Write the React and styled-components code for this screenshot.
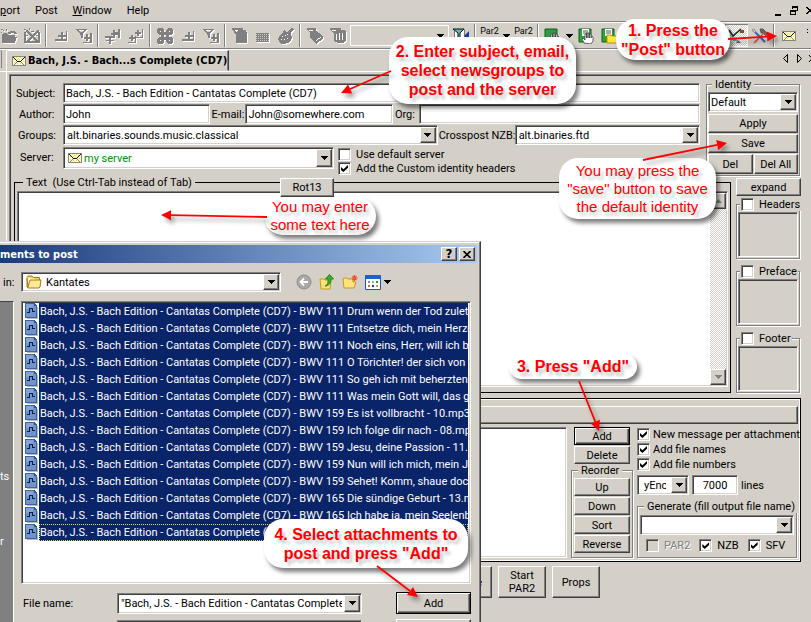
import React from 'react';
import styled, { createGlobalStyle, css } from 'styled-components';

const face = '#d4d0c8';
const uiFont = 'Roboto, "Open Sans", sans-serif';

const sunken = css`
  border: 1px solid;
  border-color: #808080 #fff #fff #808080;
  box-shadow: inset 1px 1px #404040, inset -1px -1px ${face};
`;
const raised = css`
  border: 1px solid;
  border-color: #fff #404040 #404040 #fff;
  box-shadow: inset -1px -1px #808080;
`;

const GlobalStyle = createGlobalStyle`
  * { box-sizing: border-box; }
  body { margin: 0; background: ${face}; color: #000; font: 11px/13px ${uiFont}; overflow: hidden; }
  button, input, select, textarea { font: inherit; color: inherit; border-radius: 0; margin: 0; }
`;

const Shell = styled.div`
  position: relative;
  min-height: 100vh;
  overflow: hidden;
  display: flex;
  flex-direction: column;
`;

/* ---- menu, toolbar, tabs ---- */
const MenuBar = styled.nav`
  display: flex;
  align-items: center;
  height: 22px;
  border-bottom: 1px solid #808080;
`;
const MenuItem = styled.button`
  border: 0;
  background: none;
  padding: 0;
  margin-right: 15px;
  white-space: nowrap;
`;
const WindowTools = styled.div`
  display: flex;
  margin-left: auto;
`;
const Toolbar = styled.div`
  display: flex;
  align-items: center;
  height: 27px;
  margin-left: -3px;
  border-top: 1px solid #fff;
  border-bottom: 1px solid #808080;
`;
const ToolButton = styled.button`
  flex: none;
  width: ${(p) => (p.$narrow ? 11 : 23)}px;
  height: 23px;
  padding: 0;
  display: flex;
  align-items: center;
  justify-content: center;
  border: 0;
  background: ${(p) => (p.$pressed ? 'repeating-conic-gradient(#fff 0 25%, #d4d0c8 0 50%) 0 0 / 2px 2px' : 'none')};
  box-shadow: ${(p) => (p.$pressed ? 'inset 1px 1px #808080, inset -1px -1px #fff' : 'none')};
  svg { filter: ${(p) => (p.$off ? 'drop-shadow(1px 1px 0 #fff)' : 'none')}; }
`;
const Separator = styled.span`
  flex: none;
  width: 2px;
  height: 23px;
  margin: 0 2px;
  border-left: 1px solid #808080;
  border-right: 1px solid #fff;
`;
const ToolCombo = styled.button`
  flex: none;
  display: flex;
  justify-content: flex-end;
  align-items: center;
  width: 99px;
  height: 21px;
  margin: 0 0 0 1px;
  padding: 0 4px 0 0;
  border: 1px solid #fff;
  background: none;
`;
const Spacer = styled.span`
  flex: 1;
`;
const TabRow = styled.div`
  display: flex;
  height: 23px;
  border-top: 1px solid #fff;
  border-bottom: 1px solid #fff;
`;
const TabEdge = styled.span`
  width: 2px;
  height: 18px;
  margin-right: 4px;
  border-right: 1px solid #808080;
  border-radius: 0 3px 0 0;
`;
const Tab = styled.button`
  display: flex;
  align-items: center;
  gap: 2px;
  height: 21px;
  padding: 0 1px 0 5px;
  border: 1px solid;
  border-color: #fff #404040 transparent #fff;
  border-radius: 2px 0 0 0;
  box-shadow: inset -1px 0 #808080;
  background: ${face};
  font: bold 11px/13px "DejaVu Sans Condensed", "DejaVu Sans", sans-serif;
  white-space: nowrap;
`;
const TabArrows = styled.div`
  display: flex;
  align-items: center;
  height: 17px;
  margin-left: auto;
`;

/* ---- page ---- */
const PageFrame = styled.div`
  flex: 1;
  margin-left: 6px;
  padding: 2px 0 0 2px;
  border-left: 1px solid #fff;
`;
const Page = styled.main`
  height: 100%;
  padding: 8px 10px 0 5px;
  border: solid #808080;
  border-width: 1px 0 0 1px;
  box-shadow: inset 1px 1px #404040;
`;
const Columns = styled.div`
  display: flex;
  gap: ${(p) => p.$gap || 0}px;
  align-items: ${(p) => (p.$stretch ? 'stretch' : 'flex-start')};
`;
const Form = styled.form`
  flex: 1;
  min-width: 0;
  display: flex;
  flex-direction: column;
  gap: 1px;
  margin-left: 1px;
`;
const FormRow = styled.div`
  display: flex;
  align-items: center;
  height: 20px;
`;
const ServerRow = styled.div`
  display: flex;
  align-items: flex-start;
  height: 28px;
  padding-top: 1px;
  > label { padding-top: 4px; }
`;
const FieldLabel = styled.label`
  flex: none;
  width: ${(p) => p.$width}px;
  padding-left: ${(p) => p.$inset || 0}px;
  white-space: nowrap;
`;
const TextInput = styled.input`
  ${sunken}
  flex: ${(p) => p.$grow || 1} 1 0;
  min-width: 0;
  height: 20px;
  padding: 0 2px;
  background: #fff;
  text-align: ${(p) => p.$align || 'left'};
`;
const ComboFrame = styled.div`
  ${sunken}
  flex: ${(p) => (p.$width ? '0 0 ' + p.$width + 'px' : (p.$grow || 1) + ' 1 0')};
  min-width: 0;
  height: ${(p) => p.$height || 20}px;
  padding: 1px;
  display: flex;
  align-items: stretch;
  background: #fff;
`;
const ComboIcon = styled.span`
  display: flex;
  align-items: center;
  padding-left: 3px;
`;
const comboText = css`
  flex: 1;
  min-width: 0;
  border: 0;
  outline: 0;
  padding: 0 ${(p) => p.$inset || 2}px;
  background: none;
  appearance: none;
  color: ${(p) => p.$color || '#000'};
`;
const ComboInput = styled.input`${comboText}`;
const ComboSelect = styled.select`${comboText}`;
const DropButton = styled.button`
  ${raised}
  flex: none;
  width: 16px;
  padding: 0;
  display: flex;
  align-items: center;
  justify-content: center;
  background: ${face};
`;
const Button = styled.button`
  ${raised}
  flex: ${(p) => (p.$fill ? '1 1 0' : 'none')};
  width: ${(p) => (p.$width ? p.$width + 'px' : 'auto')};
  height: ${(p) => p.$height || 18}px;
  padding: 0;
  background: ${face};
  white-space: pre-line;
  ${(p) => p.$default && 'border-color: #000; box-shadow: inset 1px 1px #fff, inset -1px -1px #404040, inset -2px -2px #808080;'}
`;
const CheckLabel = styled.label`
  display: flex;
  align-items: center;
  gap: ${(p) => p.$gap || 5}px;
  white-space: nowrap;
  color: ${(p) => (p.$off ? '#808080' : '#000')};
  text-shadow: ${(p) => (p.$off ? '1px 1px #fff' : 'none')};
`;
const CheckInput = styled.input`
  ${sunken}
  appearance: none;
  flex: none;
  width: 13px;
  height: 13px;
  background: ${(p) => (p.disabled ? face : '#fff')};
  &:checked::after {
    content: '';
    display: block;
    width: 7px;
    height: 7px;
    margin: 2px;
    background: #000;
    clip-path: polygon(0 30%, 35% 60%, 100% 0, 100% 40%, 35% 100%, 0 70%);
  }
`;
const CheckStack = styled.div`
  display: flex;
  flex-direction: column;
  gap: 1px;
  margin-left: 4px;
  padding-top: 1px;
`;
const Group = styled.fieldset`
  position: relative;
  min-width: 0;
  width: ${(p) => (p.$width ? p.$width + 'px' : 'auto')};
  flex: ${(p) => (p.$fill ? '1 1 0' : 'none')};
  margin: ${(p) => p.$margin || '0'};
  padding: ${(p) => p.$padding || '1px'};
  border: 1px solid ${(p) => (p.$dark ? '#000' : '#808080')};
  box-shadow: ${(p) => (p.$dark ? 'none' : '1px 1px #fff, inset 1px 1px #fff')};
`;
const Legend = styled.legend`
  margin-left: ${(p) => p.$inset || 4}px;
  padding: 0 ${(p) => p.$pad || 3}px;
  background: ${face};
  white-space: pre;
`;
const Stack = styled.div`
  display: flex;
  flex-direction: column;
  flex: none;
  width: ${(p) => (p.$width ? p.$width + 'px' : 'auto')};
  gap: ${(p) => p.$gap || 0}px;
  padding: ${(p) => p.$padding || '0'};
`;
const Rot13 = styled.div`
  position: absolute;
  top: -11px;
  left: 265px;
`;
const MessageBox = styled.div`
  ${sunken}
  display: flex;
  height: 196px;
  padding: 1px;
  background: #fff;
`;
const MessageText = styled.textarea`
  flex: 1;
  border: 0;
  outline: 0;
  resize: none;
  background: none;
`;
const ScrollTrack = styled.div`
  width: 16px;
  display: flex;
  flex-direction: column;
  justify-content: space-between;
  background: repeating-conic-gradient(#fff 0 25%, #d4d0c8 0 50%) 0 0 / 2px 2px;
  button { height: 16px; }
`;
const SidePanel = styled.div`
  ${sunken}
  height: 45px;
`;
const AttachPanel = styled.section`
  margin: 5px 0 0;
  padding: 7px 2px 3px;
  border: 1px solid #000;
  box-shadow: inset -1px -1px #fff, inset 1px 1px #fff;
`;
const AttachBar = styled.div`
  ${raised}
  height: 18px;
  margin-bottom: 3px;
`;
const AttachList = styled.div`
  ${sunken}
  flex: 1;
  background: #fff;
`;
const ActionRow = styled.div`
  display: flex;
  gap: 6px;
  margin: 4px 201px 0 0;
  justify-content: flex-end;
`;
const CutButton = styled(Button)`
  text-align: right;
  padding-right: 9px;
`;

/* ---- dialog ---- */
const Dialog = styled.section`
  position: absolute;
  top: 241px;
  left: 0;
  width: 481px;
  height: 400px;
  padding: 3px 3px 0 0;
  background: ${face};
  border: solid #404040;
  border-width: 1px 1px 0 0;
  border-top-color: ${face};
  box-shadow: inset -1px 0 #808080, inset 0 1px #fff;
`;
const TitleBar = styled.header`
  display: flex;
  align-items: center;
  gap: 2px;
  height: 18px;
  padding-right: 2px;
  background: linear-gradient(90deg, #1b3a7c, #a6caf0);
  color: #fff;
  font: bold 11px/13px "DejaVu Sans Condensed", "DejaVu Sans", sans-serif;
  span { flex: 1; }
  button { width: 16px; height: 14px; display: flex; align-items: center; justify-content: center; color: #000; font: bold 12px/12px "DejaVu Sans", sans-serif; }
`;
const LookRow = styled.div`
  display: flex;
  align-items: center;
  padding: 9px 0 9px 3px;
`;
const LookIcons = styled.div`
  display: flex;
  align-items: center;
  gap: 7px;
  padding-left: 15px;
  button { display: flex; align-items: center; gap: 3px; border: 0; padding: 0; background: none; height: 16px; }
`;
const DialogBody = styled.div`
  display: flex;
`;
const Places = styled.aside`
  flex: none;
  width: 14px;
  margin-right: 7px;
  height: 340px;
  padding-top: 168px;
  background: #808080;
  border-top: 1px solid #404040;
  border-right: 1px solid #fff;
  color: #fff;
  display: flex;
  flex-direction: column;
  gap: 52px;
`;
const DialogMain = styled.div`
  flex: 1;
  min-width: 0;
  padding-right: 6px;
`;
const FileList = styled.ul`
  ${sunken}
  height: 283px;
  margin: 0 0 8px;
  padding: 1px 2px 1px 3px;
  list-style: none;
  background: #fff;
  overflow: hidden;
`;
const FileItem = styled.li`
  display: flex;
  height: 17px;
`;
const FileName = styled.span`
  flex: 1;
  min-width: 0;
  margin-left: 1px;
  padding: 2px 1px;
  background: #0a246a;
  color: #fff;
  white-space: nowrap;
  overflow: hidden;
  ${(p) => p.$focus && 'outline: 1px dotted #e0d890; outline-offset: -1px;'}
`;
const DialogRow = styled.div`
  display: flex;
  align-items: center;
  margin-bottom: 5px;
`;

/* ---- annotations ---- */
const Callout = styled.div`
  position: absolute;
  left: ${(p) => p.$x}px;
  top: ${(p) => p.$y}px;
  width: ${(p) => p.$w}px;
  height: ${(p) => p.$h}px;
  display: flex;
  align-items: center;
  justify-content: center;
  border-radius: 19px;
  background: #fff;
  box-shadow: 3px 4px 4px rgba(0, 0, 0, 0.5);
  color: #f00;
  text-align: center;
  white-space: pre;
  text-shadow: 3px 4px 3px rgba(0, 0, 0, 0.22);
  font: ${(p) => (p.$light ? '15px/18px' : 'bold 16px/19px')} "Liberation Sans", Arial, sans-serif;
`;
const ArrowLayer = styled.svg`
  position: absolute;
  left: 0;
  top: 0;
  pointer-events: none;
  filter: drop-shadow(3px 4px 2px rgba(0, 0, 0, 0.35));
`;

/* ---- icons ---- */
const Down = ({ color = '#000' }) => (
  <svg width="7" height="4" viewBox="0 0 7 4" fill={color} shapeRendering="crispEdges"><path d="M0 0h7v1H6v1H5v1H4v1H3V3H2V2H1V1H0z" /></svg>
);
const Envelope = () => (
  <svg width="14" height="10" viewBox="0 0 14 10" shapeRendering="crispEdges">
    <path d="M0 0h14v10H0z" fill="#85857a" />
    <path d="M1 1h12v8H1z" fill="#fffbd0" />
    <path d="M2 3h1v1H2zM4 1h1v1H4zM6 2h1v1H6zM8 1h1v1H8zM10 2h1v1h-1zM5 7h1v1H5zM8 7h1v1H8zM2 6h1v1H2zM11 5h1v1h-1zM7 3h1v1H7zM5 3h1v1H5z" fill="#f0e030" />
    <path d="M1 1h1v1H1zM2 2h1v1H2zM3 3h1v1H3zM4 4h1v1H4zM5 5h4v1H5zM9 4h1v1H9zM10 3h1v1h-1zM11 2h1v1h-1zM12 1h1v1h-1z" fill="#111" />
    <path d="M4 6h1v1H4zM3 7h1v1H3zM2 8h1v1H2zM9 6h1v1H9zM10 7h1v1h-1zM11 8h1v1h-1z" fill="#8a8860" />
  </svg>
);
const G = ({ children, w = 16, h = 16 }) => (
  <svg width={w} height={h} viewBox={`0 0 ${w} ${h}`} fill="#808080" shapeRendering="crispEdges">{children}</svg>
);
const plusMark = 'M8 4h2v3h3v2h-3v2H8V9H5V7h3z';
const icons = {
  folder: <G><path d="M1 6h1V5h4l1 2h7v2h2l-2 6H1zM0 1h2v1H0zM2 2h1v1H2zM5 1h1v2H5zM0 4h1v1H0zM7 4h2V3h4l2 2h1v1h-3V5h-3v1H7z" /></G>,
  delmail: <G><path d="M0 4h2v11H0zM14 4h2v11h-2zM0 13h16v2H0zM0 1h2v1H0zM3 2h1v1H3zM5 0h1v2H5z" /><path d="M2 2h2l4 5 5-5h2v1L9.500 8.500 14 13h-3L8 10l-3 3H2l4.500-4.500L2 4z" /><path d="M7 3h3v1H7zM2 7h2v1H2zM12 7h2v1h-2z" /></G>,
  plus: <G><path d={plusMark} /><path d="M13 3h1v10H2v-2h11z" /></G>,
  filter: <G><path d="M0 1h11v1h-1v1H9v1H8v1H7v5H5V7H4V5H3V4H2V3H1V2H0zM3 2v1h1v1h3V3h1V2z" fillRule="evenodd" /><path d="M10 6h2v3h2v2h-2v2h-2v-2H8V9h2zM14 5h2v10H7v-1h7z" /></G>,
  sort: <G><path d="M8 2h2v2h3V1h2v9h-2V7h-3v3H8V7H6V5h2zM0 8h9v2H0zM4 10h2v2h3v1H6v3H4v-3H1v-1h3z" /></G>,
  plusTwo: <G><path d="M9 2h2v2h2v2h-2v2H9V6H7V4h2zM14 1h1v9H8V9h6zM3 7h2v2h2v2H5v2H3v-2H1V9h2zM7 8h1v7H0v-1h7z" /></G>,
  knot: <G><path fillRule="evenodd" d="M1 0h4l2 2v2h2V2l2-2h4l1 2v3l-2 2h-2v2h2l2 2v3l-1 2h-4l-2-2v-2H7v2l-2 2H1l-1-2v-3l2-2h2V7H2L0 5V2zM3 3v1h1V3zM12 3v1h1V3zM7 7v2h2V7zM3 12v1h1v-1zM12 12v1h1v-1z" /></G>,
  doc: <G><path d="M0 0h11v2h3v2h1v11H4V6H3V5H2V3H1V2H0z" /><path d="M3 2h3v1H3zM4 3h1v1H4z" fill="#fff" /></G>,
  dots: <G><path d="M1 5h13v9H1z" /><path d="M1 6.500h13M1 8.500h13M1 10.500h13M1 12.500h13" stroke="#d4d0c8" strokeDasharray="1 1" /></G>,
  bag: <G><path d="M6 2l3 2 4-4 3 1-3 4 1 5-2 4-5 2H3l-3-5 2-4 3-2z" /><path d="M4 8h1v1H4zM7 7h1v1H7zM9 10h1v1H9zM6 11h1v1H6zM3 11h1v1H3zM9 6h1v1H9z" fill="#fff" /></G>,
  book: <G><path d="M0 0h9v3l3 2 4 4v2l-7 5-6-7V5L0 2z" /><path d="M2 2h4v1H2zM9 12l5-3v1l-5 3z" fill="#fff" /></G>,
  books: <G><path d="M0 0h11v2h3l2 2v9l-3 2H8l-4-2V6L0 2z" /><path d="M2 2h4v1H2zM6 6h1v6H6zM9 5h1v7H9zM12 5h1v7h-1z" fill="#fff" /></G>,
};
const FilterColor = () => (
  <svg width="18" height="16" viewBox="0 0 18 16"><path d="M2.500 1.500h10v13h-10z" fill="#fff" stroke="#777" /><path d="M1 1h11L8 5v5H6V5z" fill="#5ab8b0" stroke="#111" /><path d="M17 3l-5 5 5 4z" fill="#1d3e9e" /><path d="M9 10l4 3-3 3-4-3z" fill="#eee021" /></svg>
);
const ParText = styled.span`
  display: flex;
  flex-direction: column;
  align-items: center;
  font: 9px/9px Roboto, sans-serif;
`;
const Par = () => (
  <ParText>Par2<svg width="16" height="8" viewBox="0 0 16 8"><path d="M0 1h4v6H0z" fill="#3ac0e8" /><path d="M3 1h3v6H3z" fill="#f0e000" /><path d="M6 1h3v6H6z" fill="#2443d8" /><path d="M0 4h3v3H0z" fill="#22a040" /><path d="M11 3h4v4h-4z" fill="none" stroke="#2aa3a0" /></svg></ParText>
);
const Hand = ({ folder, disk }) => (
  <svg width="17" height="16" viewBox="0 0 17 16">
    <path d="M1 1h12v13H1z" fill={disk ? '#26a636' : '#2f9a42'} stroke="#145a20" />
    {disk && <path d="M4 1h7v7H4z" fill="#fff" />}
    {disk && <path d="M5 3h5M5 5h5" stroke="#555" />}
    {folder
      ? <path d="M6 7h4l1 1h5v7H6z" fill="#ffe640" stroke="#c08a10" />
      : <path d="M6 15l-2-4 1-1 2 2V6h1.500v4V5H10v5V5h1.500v5V6H13v4l1-2 1 1v4l-2 3z" fill="#fff" stroke="#444" strokeWidth=".8" />}
  </svg>
);
const BrushIcon = () => (
  <svg width="17" height="16" viewBox="0 0 17 16"><path d="M1 2l4 6 8-7" fill="none" stroke="#222" strokeWidth="1.500" /><path d="M12 2h4v3h-4z" fill="#8a4a2a" /><path d="M6 9l4 4H5z" fill="#50a8a0" /><path d="M10 12l3 3H8z" fill="#666" /></svg>
);
const ToolsIcon = () => (
  <svg width="17" height="16" viewBox="0 0 17 16"><path d="M2 2l12 12" stroke="#3a5fc8" strokeWidth="2" /><path d="M12 6L3 15" stroke="#c84a28" strokeWidth="1.500" /><path d="M9 1h3l4 4-1 3-3-3h-2z" fill="#666" stroke="#444" strokeWidth=".7" /><path d="M1 2l2-1 2 3-1 1z" fill="#ccc" stroke="#777" strokeWidth=".6" /></svg>
);
const FolderIcon = () => (
  <svg width="16" height="14" viewBox="0 0 16 14"><path d="M1 2.500L2 1h4l1.500 1.500h6V5" fill="#f7cf4c" stroke="#a67a12" /><path d="M1 3v9l1 1h11l1-1 1-7H4L2 12z" fill="#fde995" stroke="#a67a12" /></svg>
);
const FileIcon = () => (
  <svg width="13" height="16" viewBox="0 0 13 16" shapeRendering="crispEdges">
    <path d="M12 4h1v12H2v-1h10z" fill="#b8b8b8" />
    <path d="M0 0h9l3 3v12H0z" fill="#3d629e" /><path d="M1 1h8v2h2v11H1z" fill="#6f93cc" /><path d="M1 1h7v5H1z" fill="#86a5d6" /><path d="M9 0v3h3z" fill="#2f57a0" />
    <path d="M2 9h2V5h4v4H7V6H5v4H2zM8 8h2v1H8z" fill="#0b1c44" />
  </svg>
);
const BackIcon = () => (
  <svg width="16" height="16" viewBox="0 0 16 16"><circle cx="8" cy="8" r="7" fill="#a9a8a4" stroke="#8d8c88" /><path d="M12 8H5M8 4.500L4.500 8 8 11.500" fill="none" stroke="#fff" strokeWidth="1.800" /></svg>
);
const UpIcon = () => (
  <svg width="16" height="16" viewBox="0 0 16 16"><path d="M1 5h4l1 1h6l-1 9H2z" fill="#ffe27a" stroke="#c59a20" /><path d="M6 12c3-1 3-4 3-7H6.500L10.500.5l4 4.500H12c0 4-2 7-6 7z" fill="#37b02c" stroke="#187010" strokeWidth=".8" /></svg>
);
const NewFolderIcon = () => (
  <svg width="16" height="16" viewBox="0 0 16 16"><path d="M1 5l1-1h3l1 1h5v3h3l-2 6H2z" fill="#ffe27a" stroke="#c59a20" /><path d="M12.500 1v6M9.500 4h6M10.500 2l4 4M14.500 2l-4 4" stroke="#f0562a" strokeWidth="1.200" /></svg>
);
const ViewsIcon = () => (
  <svg width="16" height="15" viewBox="0 0 16 15"><path d="M.5.5h15v14H.5z" fill="#fff" stroke="#1956b8" /><path d="M0 0h16v4H0z" fill="#1d62cc" /><path d="M3 6h2v2H3z" fill="#8a93b8" /><path d="M7 6h2v2H7z" fill="#9ab" /><path d="M11 6h2v2h-2z" fill="#3a8a3a" /><path d="M3 10h2v2H3z" fill="#b07a3a" /><path d="M7 10h2v2H7z" fill="#223a88" /><path d="M11 10h2v2h-2z" fill="#c9a53a" /></svg>
);

const Combo = ({ id, label, value, icon, editable, color, inset, ...frame }) => (
  <ComboFrame {...frame}>
    {icon && <ComboIcon>{icon}</ComboIcon>}
    {editable
      ? <ComboInput id={id} aria-label={label} defaultValue={value} $inset={inset} />
      : <ComboSelect id={id} aria-label={label} defaultValue={value} $color={color} $inset={inset}><option>{value}</option></ComboSelect>}
    <DropButton type="button" tabIndex={-1} aria-label="Open list"><Down /></DropButton>
  </ComboFrame>
);
const Check = ({ label, checked, disabled, gap }) => (
  <CheckLabel $off={disabled} $gap={gap}>
    <CheckInput type="checkbox" defaultChecked={checked} disabled={disabled} />{label}
  </CheckLabel>
);
const Side = ({ label }) => (
  <Group $margin="0 1px 0 0">
    <Legend $inset={2} $pad={1}><Check label={label} /></Legend>
    <SidePanel />
  </Group>
);
const Arrow = ({ from, to }) => {
  const [x1, y1] = from;
  const [x2, y2] = to;
  const len = Math.hypot(x2 - x1, y2 - y1);
  const ux = (x2 - x1) / len;
  const uy = (y2 - y1) / len;
  const bx = x2 - ux * 10;
  const by = y2 - uy * 10;
  return (
    <g>
      <path d={`M${x1} ${y1}L${bx} ${by}`} stroke="#f00" strokeWidth="1.800" />
      <path d={`M${x2} ${y2}L${bx - uy * 5} ${by + ux * 5}L${bx + uy * 5} ${by - ux * 5}z`} fill="#f00" />
    </g>
  );
};

const toolGroups = [
  ['folder', 'delmail'], ['plus', 'filter'], ['sort', 'plusTwo'],
  ['knot', 'plus', 'filter'], ['doc', 'dots', 'bag'], ['book', 'books'],
];
const files = [
  '111 Drum wenn der Tod zuletzt', '111 Entsetze dich, mein Herze', '111 Noch eins, Herr, will ich bitten',
  '111 O Törichter! der sich von Gott', '111 So geh ich mit beherzten Schritten', "111 Was mein Gott will, das g'scheh",
  '159 Es ist vollbracht - 10.mp3', '159 Ich folge dir nach - 08.mp3', '159 Jesu, deine Passion - 11.mp3',
  '159 Nun will ich mich, mein Jesu', '159 Sehet! Komm, shaue doch', '165 Die sündige Geburt - 13.mp3',
  '165 Ich habe ja, mein Seelenbräutigam', '165',
];
const subject = 'Bach, J.S. - Bach Edition - Cantatas Complete (CD7)';

export default function App() {
  return (
    <Shell>
      <GlobalStyle />
      <MenuBar>
        <MenuItem><u>p</u>ort</MenuItem>
        <MenuItem>Post</MenuItem>
        <MenuItem><u>W</u>indow</MenuItem>
        <MenuItem>Help</MenuItem>
        <WindowTools>
          <svg width="37" height="12" viewBox="0 0 37 12" fill="none" stroke="#000" shapeRendering="crispEdges">
            <path d="M1 10h6" strokeWidth="2" /><path d="M18.500 4V1.500h5v4H22M16.500 5.500h5v4h-5zM16 6.500h6M18 2.500h6" /><path d="M33 2l6 7M33 9l6-7" strokeWidth="1.500" />
          </svg>
        </WindowTools>
      </MenuBar>
      <Toolbar>
        {toolGroups.map((names, g) => (
          <React.Fragment key={g}>
            {g > 0 && <Separator />}
            {names.map((n) => <ToolButton key={n} $off aria-label={n}>{icons[n]}</ToolButton>)}
          </React.Fragment>
        ))}
        <ToolCombo aria-label="Search"><Down /></ToolCombo>
        <ToolButton aria-label="Filter"><FilterColor /></ToolButton>
        <Separator />
        <ToolButton><Par /></ToolButton>
        <ToolButton $narrow aria-label="More"><Down /></ToolButton>
        <ToolButton><Par /></ToolButton>
        <Separator />
        <ToolButton aria-label="Hand"><Hand /></ToolButton>
        <ToolButton $narrow aria-label="More"><Down /></ToolButton>
        <ToolButton aria-label="Save"><Hand disk /></ToolButton>
        <ToolButton aria-label="Save to folder"><Hand disk folder /></ToolButton>
        <Spacer />
        <ToolButton $pressed aria-label="Design"><BrushIcon /></ToolButton>
        <ToolButton aria-label="Settings"><ToolsIcon /></ToolButton>
        <Separator />
        <ToolButton aria-label="Post"><Envelope /></ToolButton>
        <ToolButton $narrow aria-label="More">
          <svg width="5" height="16" viewBox="0 0 5 16" fill="none" stroke="#000"><path d="M4 1l2 2-2 2" /></svg>
        </ToolButton>
      </Toolbar>
      <TabRow>
        <TabEdge />
        <Tab><Envelope />Bach, J.S. - Bach...s Complete (CD7)</Tab>
        <TabArrows>
          <svg width="28" height="9" viewBox="0 0 28 9" fill="none" stroke="#000"><path d="M4.500.5v8l-4-4zM14.500.5v8l4-4zM26 1l6 7M26 8l6-7" /></svg>
        </TabArrows>
      </TabRow>

      <PageFrame>
        <Page>
          <Columns $gap={6}>
            <Form>
              <FormRow>
                <FieldLabel htmlFor="subject" $width={47}>Subject:</FieldLabel>
                <TextInput id="subject" defaultValue={subject} />
              </FormRow>
              <FormRow>
                <FieldLabel htmlFor="author" $width={47} $inset={3}>Author:</FieldLabel>
                <TextInput id="author" defaultValue="John" $grow={146} />
                <FieldLabel htmlFor="email" $width={35} $inset={1}>E-mail:</FieldLabel>
                <TextInput id="email" defaultValue="John@somewhere.com" $grow={146} />
                <FieldLabel htmlFor="org" $width={26} $inset={2}>Org:</FieldLabel>
                <TextInput id="org" $grow={284} />
              </FormRow>
              <FormRow>
                <FieldLabel htmlFor="groups" $width={47} $inset={2}>Groups:</FieldLabel>
                <Combo id="groups" editable value="alt.binaries.sounds.music.classical" $grow={376} />
                <FieldLabel htmlFor="nzb" $width={77} $inset={1}>Crosspost NZB:</FieldLabel>
                <Combo id="nzb" editable value="alt.binaries.ftd" $grow={184} />
              </FormRow>
              <ServerRow>
                <FieldLabel htmlFor="server" $width={47} $inset={4}>Server:</FieldLabel>
                <Combo id="server" value="my server" icon={<Envelope />} color="#009000" $width={271} $height={22} />
                <CheckStack>
                  <Check label="Use default server" />
                  <Check label="Add the Custom identity headers" checked />
                </CheckStack>
              </ServerRow>
            </Form>
            <Group $width={94} $margin="-5px 1px 0 0">
              <Legend>Identity</Legend>
              <FormRow>
                <Combo label="Identity" value="Default" inset={1} />
              </FormRow>
              <Stack $gap={1} $padding="2px 0 0">
                <Button $height={19}>Apply</Button>
                <Button $height={19}>Save</Button>
                <Columns $gap={1}>
                  <Button $fill $height={20}>Del</Button>
                  <Button $fill $height={20}>Del All</Button>
                </Columns>
              </Stack>
            </Group>
          </Columns>

          <Columns $gap={5} $stretch>
            <Group $fill $dark $padding="2px" $margin="0 0 0 -1px">
              <Legend $inset={6}>Text  (Use Ctrl-Tab instead of Tab)</Legend>
              <Rot13><Button $width={54} $height={19}>Rot13</Button></Rot13>
              <MessageBox>
                <MessageText aria-label="Text" />
                <ScrollTrack>
                  <DropButton aria-label="Scroll up"><svg width="7" height="4" viewBox="0 0 7 4"><path d="M3.500 0L7 4H0z" fill="#808080" /></svg></DropButton>
                  <DropButton aria-label="Scroll down"><Down color="#808080" /></DropButton>
                </ScrollTrack>
              </MessageBox>
            </Group>
            <Stack $width={65} $gap={6} $padding="2px 0 0">
              <Stack $gap={2}>
                <Button>expand</Button>
                <Side label="Headers" />
              </Stack>
              <Side label="Preface" />
              <Side label="Footer" />
            </Stack>
          </Columns>

          <AttachPanel>
            <AttachBar />
            <Columns $gap={4} $stretch>
              <AttachList />
              <Stack $width={62}>
                <Stack $gap={1} $padding="0 3px">
                  <Button $default>Add</Button>
                  <Button>Delete</Button>
                </Stack>
                <Group $padding="1px 2px 4px">
                  <Legend>Reorder</Legend>
                  <Stack $gap={1}>
                    <Button>Up</Button>
                    <Button>Down</Button>
                    <Button>Sort</Button>
                    <Button>Reverse</Button>
                  </Stack>
                </Group>
              </Stack>
              <Stack $width={161} $padding="1px 0 0">
                <Stack $gap={2} $padding="0 0 4px 0">
                  <Check label="New message per attachment" checked gap={3} />
                  <Check label="Add file names" checked gap={3} />
                  <Check label="Add file numbers" checked gap={3} />
                </Stack>
                <Columns $gap={3}>
                  <Combo label="Encoding" value="yEnc" $width={52} inset={5} />
                  <FormRow>
                    <Stack $width={46}><FormRow><TextInput id="lines" defaultValue="7000" $align="center" /></FormRow></Stack>
                    <FieldLabel htmlFor="lines" $width={30} $inset={3}>lines</FieldLabel>
                  </FormRow>
                </Columns>
                <Group $margin="5px 1px 0 0" $padding="2px 2px 5px">
                  <Legend>Generate (fill output file name)</Legend>
                  <FormRow><Combo label="Output file name" editable value="" /></FormRow>
                  <Stack $padding="4px 0 0 6px">
                    <Columns $gap={9}>
                      <Check label="PAR2" disabled />
                      <Check label="NZB" checked />
                      <Check label="SFV" checked />
                    </Columns>
                  </Stack>
                </Group>
              </Stack>
            </Columns>
          </AttachPanel>
          <ActionRow>
            <CutButton $width={48} $height={32}>e</CutButton>
            <Button $width={48} $height={32}>{'Start\nPAR2'}</Button>
            <Button $width={48} $height={32}>Props</Button>
          </ActionRow>
        </Page>
      </PageFrame>

      <Dialog>
        <TitleBar>
          <span>ments to post</span>
          <Button aria-label="Help">?</Button>
          <Button aria-label="Close"><svg width="8" height="7" viewBox="0 0 8 7" stroke="#000" strokeWidth="1.600"><path d="M.5 0l7 7M7.500 0l-7 7" /></svg></Button>
        </TitleBar>
        <LookRow>
          <FieldLabel htmlFor="lookin" $width={18}>in:</FieldLabel>
          <Combo id="lookin" value="Kantates" icon={<FolderIcon />} $width={260} inset={4} />
          <LookIcons>
            <button aria-label="Back"><BackIcon /></button>
            <button aria-label="Up"><UpIcon /></button>
            <button aria-label="New folder"><NewFolderIcon /></button>
            <button aria-label="View"><ViewsIcon /><Down /></button>
          </LookIcons>
        </LookRow>
        <DialogBody>
          <Places><span>ts</span><span>r</span></Places>
          <DialogMain>
            <FileList>
              {files.map((f, i) => (
                <FileItem key={f}>
                  <FileIcon />
                  <FileName $focus={i === files.length - 1}>{subject} - BWV {f}</FileName>
                </FileItem>
              ))}
            </FileList>
            <DialogRow>
              <FieldLabel htmlFor="filename" $width={96} $inset={2}>File name:</FieldLabel>
              <Combo id="filename" editable value={'"Bach, J.S. - Bach Edition - Cantatas Complete (CD7)'} $width={245} $height={21} />
              <Spacer />
              <Button $default $width={75} $height={22}>Add</Button>
            </DialogRow>
            <DialogRow>
              <FieldLabel as="span" $width={96} />
              <Combo label="File type" value="" $width={245} $height={21} />
              <Spacer />
              <Button $width={75} $height={22} aria-label="Cancel" />
            </DialogRow>
          </DialogMain>
        </DialogBody>
      </Dialog>

      <Callout $x={616} $y={19} $w={114} $h={41}>{'1. Press the\n"Post" button'}</Callout>
      <Callout $x={389} $y={37} $w={187} $h={67}>{'2. Enter subject, email,\nselect newsgroups to\npost and the server'}</Callout>
      <Callout $light $x={559} $y={158} $w={157} $h={61}>{'You may press the\n"save" button to save\nthe default identity'}</Callout>
      <Callout $light $x={264} $y={197} $w={112} $h={38}>{'You may enter\nsome text here'}</Callout>
      <Callout $x={509} $y={354} $w={128} $h={25}>{'3. Press "Add"'}</Callout>
      <Callout $x={264} $y={519} $w={204} $h={49}>{'4. Select attachments to\npost and press "Add"'}</Callout>
      <ArrowLayer width="811" height="622" viewBox="0 0 811 622">
        <Arrow from={[728, 39]} to={[777, 36]} />
        <Arrow from={[391, 71]} to={[341, 93]} />
        <Arrow from={[267, 217]} to={[161, 215]} />
        <Arrow from={[643, 160]} to={[727, 143]} />
        <Arrow from={[579, 381]} to={[599, 431]} />
        <Arrow from={[377, 566]} to={[418, 597]} />
      </ArrowLayer>
    </Shell>
  );
}
